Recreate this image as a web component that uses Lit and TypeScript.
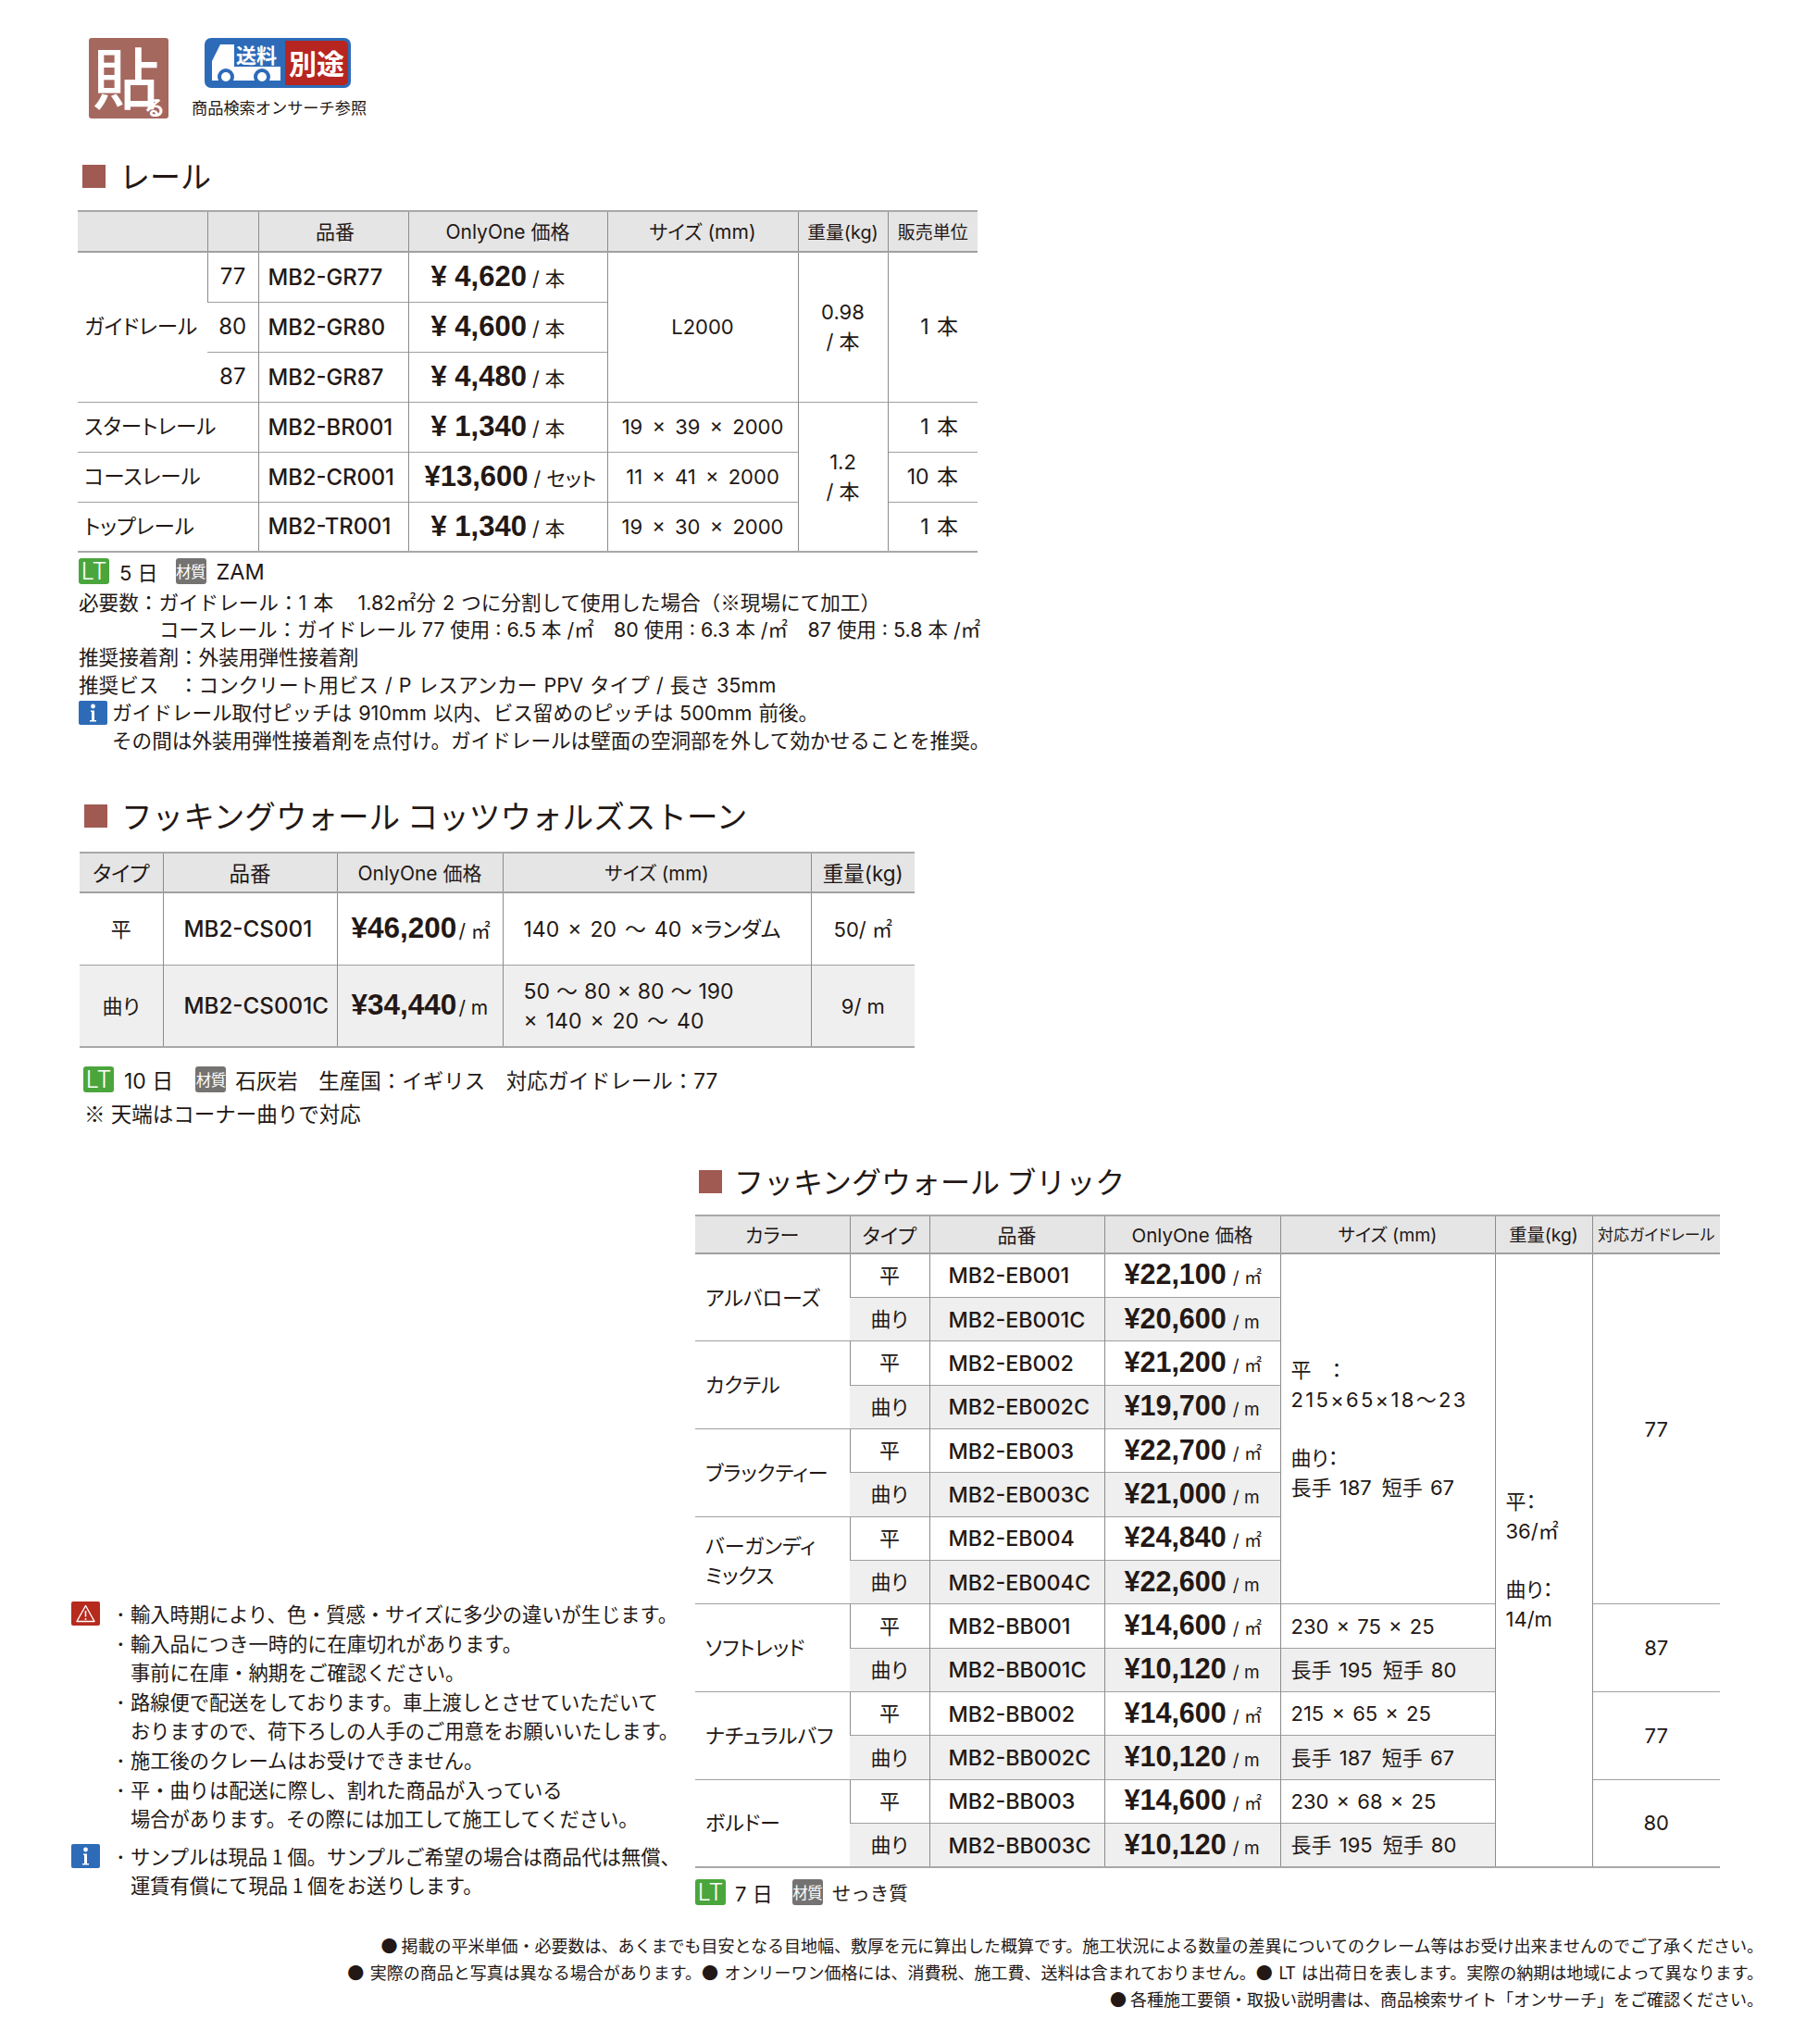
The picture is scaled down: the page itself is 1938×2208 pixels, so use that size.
import { LitElement, html, css, nothing } from "lit";
import { customElement } from "lit/decorators.js";

const rail1 = [
  ["77", "MB2-GR77", "4,620"],
  ["80", "MB2-GR80", "4,600"],
  ["87", "MB2-GR87", "4,480"],
];
const brick = [
  ["アルバローズ", "MB2-EB001", "¥22,100", "MB2-EB001C", "¥20,600"],
  ["カクテル", "MB2-EB002", "¥21,200", "MB2-EB002C", "¥19,700"],
  ["ブラックティー", "MB2-EB003", "¥22,700", "MB2-EB003C", "¥21,000"],
  ["バーガンディ|ミックス", "MB2-EB004", "¥24,840", "MB2-EB004C", "¥22,600"],
  ["ソフトレッド", "MB2-BB001", "¥14,600", "MB2-BB001C", "¥10,120", "230 × 75 × 25", "長手 195\u2002短手 80", "87"],
  ["ナチュラルバフ", "MB2-BB002", "¥14,600", "MB2-BB002C", "¥10,120", "215 × 65 × 25", "長手 187\u2002短手 67", "77"],
  ["ボルドー", "MB2-BB003", "¥14,600", "MB2-BB003C", "¥10,120", "230 × 68 × 25", "長手 195\u2002短手 80", "80"],
];

@customElement("app-root")
export class AppRoot extends LitElement {
  static styles = css`
    :host { display: block; width: 1938px; height: 2208px; background: #fff; color: #231815;
      font-family: "Inter","Noto Sans CJK JP",sans-serif; font-size: 22px; font-feature-settings: "palt"; font-weight: 400; overflow: hidden; }
    .ja { font-family: "Noto Sans CJK JP",sans-serif; }
    .top { display: flex; gap: 25px; padding: 41px 0 0 96px; height: 87px; }
    .hari { width: 86px; height: 87px; background: #a5685f; border-radius: 3px; position: relative; color: #fff;
      display: flex; justify-content: flex-start; padding-left: 4px; box-sizing: border-box; font-size: 72px; line-height: 80px; font-weight: 500; font-family: "Noto Sans CJK JP",sans-serif; }
    .hari small { position: absolute; right: 5px; bottom: 0; font-size: 22px; line-height: 28px; font-weight: 700; }
    .ship { width: 187px; }
    .badge { position: relative; margin-left: 14px; width: 158px; height: 54px; background: #2d6bb8; border-radius: 7px; display: flex; justify-content: flex-end; align-items: center; padding-right: 3px; box-sizing: border-box; }
    .truck { position: absolute; left: 5px; top: 5px; width: 78px; height: 44px; }
    .souryou { position: absolute; left: 34px; top: 3px; font: 700 22px/28px "Noto Sans CJK JP",sans-serif; color: #fff; }
    .betto { width: 68px; height: 48px; background: #b72521; border-radius: 0 5px 5px 0; color: #fff; font: 700 30px/46px "Noto Sans CJK JP",sans-serif; text-align: center; }
    .cap { font: 400 17.2px/22px "Noto Sans CJK JP",sans-serif; margin-top: 10px; white-space: nowrap; font-feature-settings: normal; }

    .h { display: flex; align-items: center; height: 30px; font: 400 33px/30px "Noto Sans CJK JP",sans-serif; white-space: nowrap; font-feature-settings: normal; }
    .h i { width: 25px; height: 25px; background: #a05a52; flex: none; }
    .h span { margin-top: -3px; }
    .h1 { margin: 47px 0 0 89px; gap: 15px; }
    .h2 { margin: 51px 0 0 91px; gap: 15px; font-size: 33.6px; }
    .h2 span { margin-top: 0; }
    .h3 { gap: 13px; margin-left: 4px; font-size: 32px; }

    table { border-collapse: collapse; table-layout: fixed; border-top: 2px solid #a8a8a8; border-bottom: 2px solid #a8a8a8; }
    th { background: #e5e5e5; font-weight: 400; font-size: 21px; padding: 0 0 2px; border-bottom: 2px solid #a0a0a0; border-left: 1px solid #8c8c8c; white-space: nowrap; }
    th:first-child, td:first-child { border-left: none; }
    td { padding: 0; border-left: 1px solid #8c8c8c; border-top: 1.5px solid #a0a0a0; white-space: nowrap; line-height: 32px; }
    .c { text-align: center; }
    .code { font-weight: 500; padding-left: 10px; padding-top: 1px; }
    .price { padding-top: 2px; }
    .yen { font: 700 31px/32px "Liberation Sans",sans-serif; }
    .unit { font-size: 21.5px; margin-left: 6px; }
    .pad { padding-left: 7px; font-size: 22.5px; }
    .sz { padding-left: 14px; }
    .qty { text-align: right; padding-right: 21px; font-size: 23px; word-spacing: 2px; }

    .t1 { margin: 22px 0 0 84px; width: 972px; }
    .t1 col:nth-child(1) { width: 140px; } .t1 col:nth-child(2) { width: 55px; } .t1 col:nth-child(3) { width: 162px; }
    .t1 col:nth-child(4) { width: 215px; } .t1 col:nth-child(5) { width: 206px; } .t1 col:nth-child(6) { width: 97px; } .t1 col:nth-child(7) { width: 97px; }
    .t1 thead tr { height: 44px; } .t1 tbody tr { height: 54px; }
    .t1 .code { font-size: 23.8px; }
    .t1 .num { font-size: 24px; }
    .t1 .price { padding-left: 24px; } .t1 .price.wide { padding-left: 17px; }
    .t1 .size { word-spacing: 4px; }
    .t1 th:nth-child(3) { padding-left: 4px; }
    .t1 th:nth-child(6) { font-size: 19.8px; } .t1 th:nth-child(7) { font-size: 19px; }

    .t2 { margin: 24px 0 0 86px; width: 902px; }
    .t2 col:nth-child(1) { width: 90px; } .t2 col:nth-child(2) { width: 188px; } .t2 col:nth-child(3) { width: 179px; }
    .t2 col:nth-child(4) { width: 333px; } .t2 col:nth-child(5) { width: 112px; }
    .t2 thead tr { height: 43px; } .t2 .r1 { height: 78px; } .t2 .r2 { height: 89px; }
    .t2 td { padding-top: 2px; }
    .t2 .code { padding-left: 22px; font-size: 24.2px; } .t2 .yen { font-size: 31.5px; } .t2 .unit { margin-left: 2px; font-size: 21px; } .t2 .price { padding-left: 15px; }
    .t2 .sz { padding-left: 22px; font-size: 23px; word-spacing: 2.5px; }
    .t2 .tight { word-spacing: 0.5px; }
    .t2 th:nth-child(1) { font-size: 23px; } .t2 th:nth-child(2) { font-size: 22.5px; }
    .t2 th:nth-child(5) { font-size: 22.5px; }
    .t2 th:nth-child(4) { font-size: 20.5px; }
    td.g { background: #efefef; }

    .t3 { margin-top: 21px; width: 1107px; }
    .t3 col:nth-child(1) { width: 167px; } .t3 col:nth-child(2) { width: 86px; } .t3 col:nth-child(3) { width: 189px; }
    .t3 col:nth-child(4) { width: 190px; } .t3 col:nth-child(5) { width: 232px; } .t3 col:nth-child(6) { width: 105px; } .t3 col:nth-child(7) { width: 138px; }
    .t3 thead tr { height: 41px; } .t3 tbody tr { height: 47.36px; }
    .t3 .code { padding-left: 20px; font-size: 23.3px; } .t3 .price { padding-left: 21px; } .t3 .yen { font-size: 30.5px; } .t3 .unit { margin-left: 7px; font-size: 19px; }
    .t3 .sz { padding-left: 11px; word-spacing: 2px; } .t3 .name { padding-left: 11px; font-size: 22px; }
    .t3 .wt { padding-left: 11px; font-size: 22px; }
    .t3 .small { font-size: 17px; }
    .t3 .wide { letter-spacing: 2.3px; }
    .t3 th:nth-child(2) { font-size: 22px; }
    .t3 th:nth-child(5) { font-size: 19.5px; } .t3 th:nth-child(6) { font-size: 19.3px; } .t3 th:nth-child(4) { font-size: 20.5px; }
    .gap { height: 31px; display: block; }

    .leg { display: flex; align-items: center; height: 28px; white-space: nowrap; font-feature-settings: normal; }
    .lt, .mat { display: inline-flex; align-items: center; justify-content: center; width: 33px; height: 28px; border-radius: 3px; color: #fff; flex: none; }
    .lt { background: #4aa63c; font-size: 25px; font-weight: 300; }
    .mat { background: #757371; font-size: 16.5px; letter-spacing: -0.5px; font-family: "Noto Sans CJK JP",sans-serif; }
    .leg1 { margin: 6px 0 0 85px; } .leg1 .d { margin: 0 19px 0 11px; } .leg1 .m { margin-left: 11px; font-size: 23.5px; }
    .leg2 { margin: 20px 0 0 90px; font-size: 22.5px; } .leg2 .d { margin: 0 24px 0 11px; font-size: 23px; } .leg2 .m { margin-left: 10px; }
    .leg3 { margin-top: 12px; font-size: 20.5px; } .leg3 .d { margin: 0 21px 0 10px; font-size: 22px; } .leg3 .m { margin-left: 10px; }

    .notes { margin: 4px 0 0 85px; line-height: 30px; white-space: nowrap; font-size: 21.6px; font-feature-settings: normal; word-spacing: 1px; }
    .notes > div { height: 30px; }
    .notes .in { padding-left: 87px; word-spacing: 0; font-size: 21.45px; }
    .notes .inf { display: flex; align-items: center; gap: 5px; }
    .notes .in2 { padding-left: 36px; }
    .notes .sp { margin-left: 5px; }
    .ic { width: 31px; height: 26px; flex: none; display: block; }
    .note2 { margin: 7px 0 0 91px; height: 30px; line-height: 30px; font-feature-settings: normal; font-size: 22.5px; }

    .lower { display: flex; margin: 44px 0 0 77px; }
    .left { width: 674px; align-self: flex-end; padding-bottom: 6px; box-sizing: border-box; font-size: 21.25px; font-feature-settings: normal; font-family: "Noto Sans CJK JP",sans-serif; white-space: nowrap; }
    .line { display: flex; height: 31.6px; line-height: 31.6px; align-items: center; }
    .slot { width: 48px; flex: none; }
    .bul { width: 16px; flex: none; }
    .mt { margin-top: 9px; }

    .foot { margin: 29px 33px 0 0; text-align: right; font: 400 18px/29px "Noto Sans CJK JP",sans-serif; white-space: nowrap; font-feature-settings: normal; }
    .foot .wsp { word-spacing: 2.5px; }
  `;

  info() {
    return html`<svg class="ic" viewBox="0 0 31 26"><rect width="31" height="26" rx="2" fill="#2d6bb8"/><circle cx="15.5" cy="6" r="2.4" fill="#fff"/><path d="M13 10.5h4v10.5h2v1.6h-7V21h2v-9h-1z" fill="#fff"/></svg>`;
  }
  warn() {
    return html`<svg class="ic" viewBox="0 0 31 26"><rect width="31" height="26" rx="2" fill="#b72a1e"/><path d="M15.5 4.5 25 21.5H6z" fill="none" stroke="#fff" stroke-width="1.4" stroke-linejoin="round"/><path d="M15.5 10v6.5" stroke="#fff" stroke-width="1.6"/><circle cx="15.5" cy="19" r="1" fill="#fff"/></svg>`;
  }
  legend(cls: string, day: string, rest: unknown) {
    return html`<div class="leg ${cls}"><span class="lt">LT</span><span class="d">${day}</span><span class="mat">材質</span><span class="m">${rest}</span></div>`;
  }

  renderRail() {
    const tail = [
      ["スタートレール", "MB2-BR001", "¥ 1,340", "本", "19 × 39 × 2000", "1 本"],
      ["コースレール", "MB2-CR001", "¥13,600", "セット", "11 × 41 × 2000", "10 本"],
      ["トップレール", "MB2-TR001", "¥ 1,340", "本", "19 × 30 × 2000", "1 本"],
    ];
    return html`<table class="t1">
      <colgroup><col><col><col><col><col><col><col></colgroup>
      <thead><tr><th></th><th></th><th>品番</th><th>OnlyOne 価格</th><th>サイズ (mm)</th><th>重量(kg)</th><th>販売単位</th></tr></thead>
      <tbody>
        ${rail1.map((r, i) => html`<tr>
          ${i === 0 ? html`<td rowspan="3" class="pad">ガイドレール</td>` : nothing}
          <td class="c num">${r[0]}</td><td class="code">${r[1]}</td>
          <td class="price"><span class="yen">¥ ${r[2]}</span><span class="unit">/ 本</span></td>
          ${i === 0 ? html`<td rowspan="3" class="c">L2000</td><td rowspan="3" class="c">0.98<br>/ 本</td><td rowspan="3" class="qty">1 本</td>` : nothing}
        </tr>`)}
        ${tail.map((r, i) => html`<tr>
          <td colspan="2" class="pad">${r[0]}</td><td class="code">${r[1]}</td>
          <td class="price ${i === 1 ? "wide" : ""}"><span class="yen">${r[2]}</span><span class="unit">/ ${r[3]}</span></td>
          <td class="c size">${r[4]}</td>
          ${i === 0 ? html`<td rowspan="3" class="c">1.2<br>/ 本</td>` : nothing}
          <td class="qty">${r[5]}</td>
        </tr>`)}
      </tbody></table>`;
  }

  renderStone() {
    return html`<table class="t2">
      <colgroup><col><col><col><col><col></colgroup>
      <thead><tr><th>タイプ</th><th>品番</th><th>OnlyOne 価格</th><th>サイズ (mm)</th><th>重量(kg)</th></tr></thead>
      <tbody>
        <tr class="r1"><td class="c">平</td><td class="code">MB2-CS001</td><td class="price"><span class="yen">¥46,200</span><span class="unit">/ ㎡</span></td><td class="sz">140 × 20 ～ 40 ×ランダム</td><td class="c">50/ ㎡</td></tr>
        <tr class="r2"><td class="c g">曲り</td><td class="code g">MB2-CS001C</td><td class="price g"><span class="yen">¥34,440</span><span class="unit">/ m</span></td><td class="sz g"><span class="tight">50 ～ 80 × 80 ～ 190</span><br>× 140 × 20 ～ 40</td><td class="c g">9/ m</td></tr>
      </tbody></table>`;
  }

  renderBrick() {
    return html`<table class="t3">
      <colgroup><col><col><col><col><col><col><col></colgroup>
      <thead><tr><th>カラー</th><th>タイプ</th><th>品番</th><th>OnlyOne 価格</th><th>サイズ (mm)</th><th>重量(kg)</th><th class="small">対応ガイドレール</th></tr></thead>
      <tbody>
      ${brick.map((b, i) => html`<tr>
          <td rowspan="2" class="name">${b[0].split("|").map((s, k) => html`${k ? html`<br>` : nothing}${s}`)}</td>
          <td class="c">平</td><td class="code">${b[1]}</td>
          <td class="price"><span class="yen">${b[2]}</span><span class="unit">/ ㎡</span></td>
          ${i === 0 ? html`<td rowspan="8" class="sz">平　：<br><span class="wide">215×65×18～23</span><br><span class="gap"></span>曲り：<br>長手 187\u2002短手 67</td>` : nothing}
          ${i > 3 ? html`<td class="sz">${b[5]}</td>` : nothing}
          ${i === 0 ? html`<td rowspan="14" class="wt">平：<br>36/㎡<br><span class="gap"></span>曲り：<br>14/m</td>` : nothing}
          ${i === 0 ? html`<td rowspan="8" class="c">77</td>` : nothing}
          ${i > 3 ? html`<td rowspan="2" class="c">${b[7]}</td>` : nothing}
        </tr>
        <tr>
          <td class="c g">曲り</td><td class="code g">${b[3]}</td>
          <td class="price g"><span class="yen">${b[4]}</span><span class="unit">/ m</span></td>
          ${i > 3 ? html`<td class="sz g">${b[6]}</td>` : nothing}
        </tr>`)}
      </tbody></table>`;
  }

  render() {
    const warn = [
      ["・", "輸入時期により、色・質感・サイズに多少の違いが生じます。"],
      ["・", "輸入品につき一時的に在庫切れがあります。"],
      ["", "事前に在庫・納期をご確認ください。"],
      ["・", "路線便で配送をしております。車上渡しとさせていただいて"],
      ["", "おりますので、荷下ろしの人手のご用意をお願いいたします。"],
      ["・", "施工後のクレームはお受けできません。"],
      ["・", "平・曲りは配送に際し、割れた商品が入っている"],
      ["", "場合があります。その際には加工して施工してください。"],
    ];
    return html`
      <div class="top">
        <div class="hari">貼<small>る</small></div>
        <div class="ship">
          <div class="badge">
            <svg class="truck" viewBox="0 0 78 44"><path d="M3 41V20L12 2h15v24h50v15z" fill="#fff"/><circle cx="18" cy="37" r="9" fill="#2d6bb8"/><circle cx="57" cy="37" r="9" fill="#2d6bb8"/><circle cx="18" cy="37" r="5" fill="#fff"/><circle cx="57" cy="37" r="5" fill="#fff"/></svg>
            <span class="souryou">送料</span>
            <span class="betto">別途</span>
          </div>
          <div class="cap">商品検索オンサーチ参照</div>
        </div>
      </div>

      <div class="h h1"><i></i><span>レール</span></div>
      ${this.renderRail()}
      ${this.legend("leg1", "5 日", "ZAM")}
      <div class="notes">
        <div>必要数：ガイドレール：1 本<span class="sp"></span>　1.82㎡分 2 つに分割して使用した場合（<span class="ja">※</span>現場にて加工）</div>
        <div class="in">コースレール：ガイドレール 77 使用 : 6.5 本 /㎡　80 使用 : 6.3 本 /㎡　87 使用 : 5.8 本 /㎡</div>
        <div>推奨接着剤：外装用弾性接着剤</div>
        <div>推奨ビス　：コンクリート用ビス / P レスアンカー PPV タイプ / 長さ 35mm</div>
        <div class="inf">${this.info()}<div>ガイドレール取付ピッチは 910mm 以内、ビス留めのピッチは 500mm 前後。</div></div>
        <div class="in2">その間は外装用弾性接着剤を点付け。ガイドレールは壁面の空洞部を外して効かせることを推奨。</div>
      </div>

      <div class="h h2"><i></i><span>フッキングウォール コッツウォルズストーン</span></div>
      ${this.renderStone()}
      ${this.legend("leg2", "10 日", "石灰岩　生産国：イギリス　対応ガイドレール：77")}
      <div class="note2"><span class="ja">※</span> 天端はコーナー曲りで対応</div>

      <div class="lower">
        <div class="left">
          ${warn.map((w, i) => html`<div class="line"><div class="slot">${i === 0 ? this.warn() : nothing}</div><div class="bul">${w[0] ? "･" : ""}</div><div>${w[1]}</div></div>`)}
          <div class="line mt"><div class="slot">${this.info()}</div><div class="bul">･</div><div>サンプルは現品 1 個。サンプルご希望の場合は商品代は無償、</div></div>
          <div class="line"><div class="slot"></div><div class="bul"></div><div>運賃有償にて現品 1 個をお送りします。</div></div>
        </div>
        <div class="right">
          <div class="h h3"><i></i><span>フッキングウォール ブリック</span></div>
          ${this.renderBrick()}
          ${this.legend("leg3", "7 日", "せっき質")}
        </div>
      </div>

      <div class="foot">
        <div>● 掲載の平米単価・必要数は、あくまでも目安となる目地幅、敷厚を元に算出した概算です。施工状況による数量の差異についてのクレーム等はお受け出来ませんのでご了承ください。</div>
        <div class="wsp">● 実際の商品と写真は異なる場合があります。● オンリーワン価格には、消費税、施工費、送料は含まれておりません。● LT は出荷日を表します。実際の納期は地域によって異なります。</div>
        <div>● 各種施工要領・取扱い説明書は、商品検索サイト「オンサーチ」をご確認ください。</div>
      </div>
    `;
  }
}
